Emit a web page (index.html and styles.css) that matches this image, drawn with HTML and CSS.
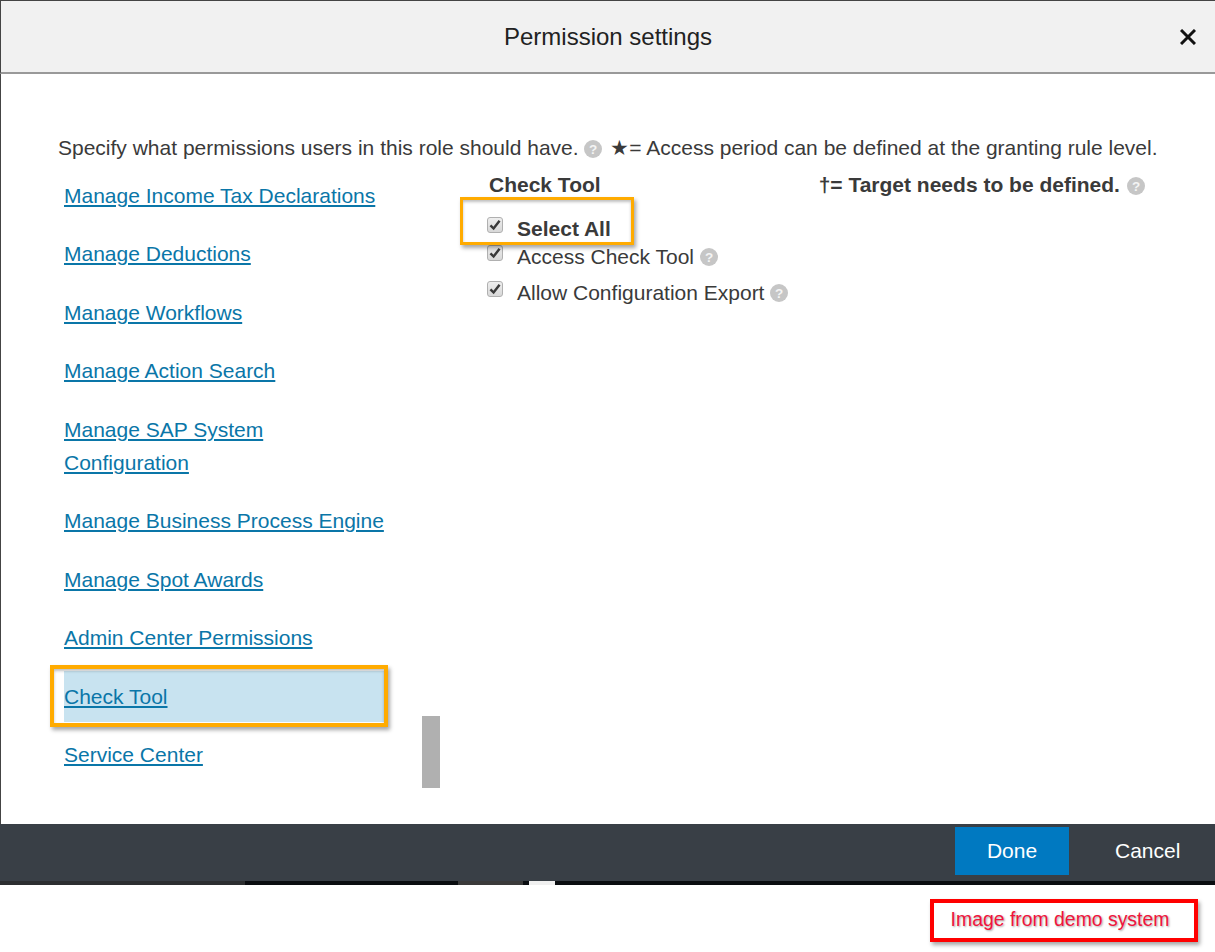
FILE: index.html
```html
<!DOCTYPE html>
<html lang="en">
<head>
<meta charset="utf-8">
<title>Permission settings</title>
<link rel="stylesheet" href="styles.css">
</head>
<body>
<div class="dialog">
  <header class="head">
    <h1 class="title">Permission settings</h1>
    <svg class="close" viewBox="0 0 16 16" aria-label="Close"><path d="M1 1 15 15M15 1 1 15"/></svg>
  </header>
  <main class="body">
    <p class="intro">Specify what permissions users in this role should have. <span class="help"><svg viewBox="0 0 16 16"><circle cx="8" cy="8" r="8"/><text x="8" y="12" text-anchor="middle">?</text></svg></span> <span class="star">★</span>= Access period can be defined at the granting rule level.</p>
    <div class="cols">
      <nav class="nav">
        <a class="item" href="#"><span>Manage Income Tax Declarations</span></a>
        <a class="item" href="#"><span>Manage Deductions</span></a>
        <a class="item" href="#"><span>Manage Workflows</span></a>
        <a class="item" href="#"><span>Manage Action Search</span></a>
        <a class="item" href="#"><span>Manage SAP System Configuration</span></a>
        <a class="item" href="#"><span>Manage Business Process Engine</span></a>
        <a class="item" href="#"><span>Manage Spot Awards</span></a>
        <a class="item" href="#"><span>Admin Center Permissions</span></a>
        <a class="item active" href="#"><span>Check Tool</span></a>
        <a class="item" href="#"><span>Service Center</span></a>
      </nav>
      <section class="panel">
        <div class="panel-head">
          <h2 class="panel-title">Check Tool</h2>
          <div class="target"><span class="dagger">†</span>= Target needs to be defined. <span class="help"><svg viewBox="0 0 16 16"><circle cx="8" cy="8" r="8"/><text x="8" y="12" text-anchor="middle">?</text></svg></span></div>
        </div>
        <div class="perm perm-all">
          <span class="check"><svg viewBox="0 0 16 16"><path d="M2.8 8.4 6.4 12 13.2 3.2"/></svg></span>
          <b>Select All</b>
        </div>
        <div class="perm perm-a">
          <span class="check"><svg viewBox="0 0 16 16"><path d="M2.8 8.4 6.4 12 13.2 3.2"/></svg></span>
          <span>Access Check Tool</span>
          <span class="help"><svg viewBox="0 0 16 16"><circle cx="8" cy="8" r="8"/><text x="8" y="12" text-anchor="middle">?</text></svg></span>
        </div>
        <div class="perm perm-b">
          <span class="check"><svg viewBox="0 0 16 16"><path d="M2.8 8.4 6.4 12 13.2 3.2"/></svg></span>
          <span>Allow Configuration Export</span>
          <span class="help"><svg viewBox="0 0 16 16"><circle cx="8" cy="8" r="8"/><text x="8" y="12" text-anchor="middle">?</text></svg></span>
        </div>
      </section>
    </div>
    <div class="thumb"></div>
    <div class="mark mark-all"></div>
    <div class="mark mark-nav"></div>
  </main>
  <footer class="foot">
    <button class="btn btn-done" type="button">Done</button>
    <button class="btn btn-cancel" type="button">Cancel</button>
  </footer>
  <div class="strip">
    <i class="seg seg-a"></i><i class="seg seg-b"></i><i class="seg seg-c"></i><i class="seg seg-d"></i><i class="seg seg-e"></i><i class="seg seg-f"></i>
  </div>
</div>
<div class="note"><span class="note-box">Image from demo system</span></div>
</body>
</html>
```
FILE: styles.css
```css
* { box-sizing: border-box; }
html, body { margin: 0; padding: 0; background: #fff; }
body {
  width: 1215px;
  height: 952px;
  overflow: hidden;
  font-family: "Liberation Sans", Arial, sans-serif;
  color: #3a3a3a;
  font-size: 21px;
}
.dialog { position: relative; display: flex; flex-direction: column; }
.head {
  height: 74px;
  background: #f1f1f1;
  border-top: 1px solid #444;
  border-left: 1px solid #444;
  border-bottom: 2px solid #999;
  display: flex;
  align-items: center;
  justify-content: center;
  position: relative;
}
.title { margin: 0; font-size: 24px; font-weight: 400; color: #222; }
.close {
  position: absolute;
  right: 19px;
  top: 28px;
  width: 16px;
  height: 16px;
  fill: none;
  stroke: #111;
  stroke-width: 3;
}
.body {
  position: relative;
  height: 750px;
  border-left: 1px solid #444;
  padding: 59px 0 0 57px;
}
.intro { margin: 0; line-height: 30px; height: 30px; white-space: nowrap; }
.star { color: #3a3a3a; margin-left: 2px; }
.help { display: inline-block; width: 18px; height: 18px; vertical-align: -3px; }
.help svg { display: block; width: 100%; height: 100%; }
.help circle { fill: #c6c6c6; }
.help text { fill: #f4f4f4; font-size: 12px; font-weight: 700; font-family: "Liberation Sans", sans-serif; }
.cols { display: flex; margin-top: 6.9px; }
.nav { width: 320px; margin-left: 6px; flex: none; display: flex; flex-direction: column; gap: 7.5px; }
.item { display: block; padding: 9px 0; line-height: 33px; color: #0a76a8; text-decoration: underline; }
.item.active { background: #c8e3f0; }
.panel { margin-left: 105px; margin-top: 0.1px; flex: 1; }
.panel-head { display: flex; align-items: center; height: 30px; position: relative; font-weight: 700; }
.panel-title { margin: 0; font-size: 21px; font-weight: 700; }
.target { margin-left: 218px; white-space: nowrap; }
.target .help { margin-left: 1px; }
.perm { display: flex; align-items: center; height: 36px; position: relative; }
.perm .help { margin-left: 6px; }
.perm .check { margin-left: -2px; margin-right: 14px; flex: none; }
.perm-all { height: 30px; margin-top: 14px; margin-bottom: -5px; }
.check {
  width: 16px;
  height: 16px;
  border: 1px solid #b0b0b0;
  border-radius: 3px;
  background: linear-gradient(#eeeeee, #d8d8d8);
  position: relative;
  top: -4px;
}
.check svg { display: block; width: 14px; height: 14px; fill: none; stroke: #3a3a3a; stroke-width: 2.8; }
.thumb { position: absolute; left: 421px; top: 642px; width: 18px; height: 72px; background: #b0b0b0; }
.mark { position: absolute; border: 3px solid #ffab00; box-shadow: 2px 3px 4px rgba(0,0,0,.35), inset 0 2px 3px rgba(0,0,0,.25); }
.mark-all { left: 459px; top: 123px; width: 174px; height: 48px; }
.mark-nav { left: 49px; top: 591px; width: 338px; height: 62px; border-width: 4px; }
.foot {
  height: 57px;
  background: #393f46;
  display: flex;
  align-items: flex-start;
  justify-content: flex-end;
  padding: 3px 0 0;
}
.btn { border: 0; font-family: inherit; font-size: 21px; color: #fff; background: none; height: 48px; padding: 0; }
.btn-done { width: 114px; background: #0079c1; }
.btn-cancel { width: 146px; padding-left: 46px; text-align: left; }
.strip { display: flex; height: 4px; background: #0a0d10; }
.seg { display: block; height: 4px; }
.seg-a { width: 245px; background: #2c2e30; }
.seg-b { width: 213px; background: #0a0d10; }
.seg-c { width: 65px; background: #3a3a3a; }
.seg-d { width: 6px; background: #0a0d10; }
.seg-e { width: 26px; background: #f0f0f0; }
.seg-f { flex: 1; background: #0a0d10; }
.note { display: flex; justify-content: flex-end; padding: 14px 17px 0 0; }
.note-box {
  width: 268px;
  height: 43px;
  border: 4px solid #f00;
  box-shadow: 2px 3px 4px rgba(0,0,0,.35);
  color: #f0143c;
  text-shadow: 1px 1px 2px rgba(0,0,0,.35);
  font-size: 19.4px;
  line-height: 33px;
  padding-right: 8px;
  text-align: center;
  white-space: nowrap;
}
```
